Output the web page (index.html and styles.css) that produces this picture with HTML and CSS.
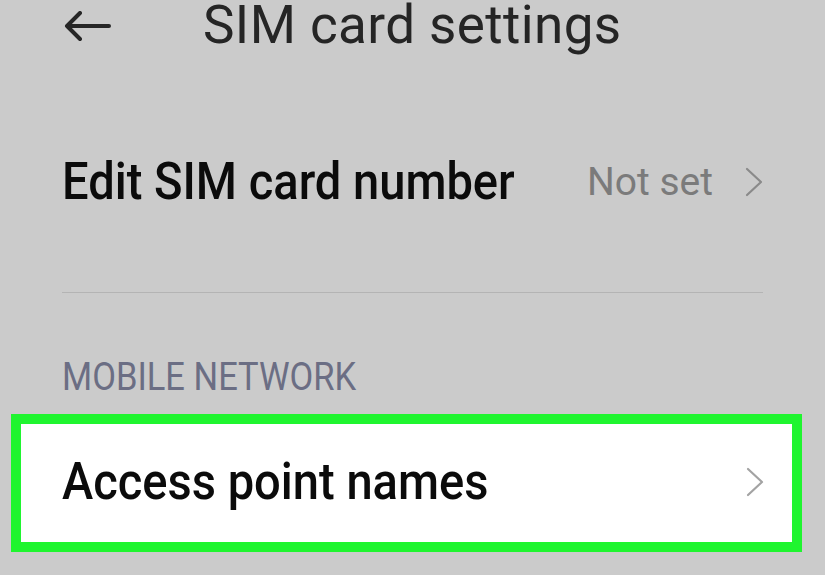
FILE: index.html
```html
<!DOCTYPE html>
<html lang="en">
<head>
<meta charset="utf-8">
<title>SIM card settings</title>
<link rel="stylesheet" href="styles.css">
</head>
<body>
<div class="screen">
  <header class="topbar">
    <svg class="back" width="48" height="32" viewBox="0 0 48 32" aria-hidden="true">
      <path d="M16 2 L3 15 L16 28 M3 15 L45 15" fill="none" stroke="#262626" stroke-width="4" stroke-linecap="round" stroke-linejoin="round"/>
    </svg>
    <h1 class="title">SIM card settings</h1>
  </header>

  <div class="row row-edit">
    <span class="row-label"><span class="condensed">Edit SIM card number</span></span>
    <span class="row-value">Not set</span>
    <svg class="chev" width="18" height="30" viewBox="0 0 18 30" aria-hidden="true">
      <path d="M2 2 L16 15 L2 28" fill="none" stroke="#8a8a8a" stroke-width="2.2" stroke-linecap="round" stroke-linejoin="round"/>
    </svg>
  </div>

  <div class="divider"></div>

  <div class="section-label"><span class="condensed-sm">MOBILE NETWORK</span></div>

  <div class="highlight">
    <div class="row row-apn">
      <span class="row-label"><span class="condensed">Access point names</span></span>
      <svg class="chev" width="18" height="30" viewBox="0 0 18 30" aria-hidden="true">
        <path d="M2 2 L16 15 L2 28" fill="none" stroke="#a3a3a3" stroke-width="2.2" stroke-linecap="round" stroke-linejoin="round"/>
      </svg>
    </div>
  </div>
</div>
</body>
</html>
```

FILE: styles.css
```css
html, body {
  margin: 0;
  padding: 0;
  background: #cbcbcb;
}

.screen {
  width: 825px;
  height: 575px;
  overflow: hidden;
  font-family: Roboto, "Liberation Sans", sans-serif;
}

.topbar {
  display: flex;
  align-items: center;
  height: 62px;
  margin-top: -6px;
}

.back {
  margin-left: 64px;
  margin-top: 4px;
  flex: none;
}

.title {
  margin: 0 0 0 91px;
  font-size: 53px;
  line-height: 62px;
  font-weight: 400;
  color: #252525;
  letter-spacing: 0.4px;
  white-space: nowrap;
}

.condensed,
.condensed-sm {
  display: inline-block;
  transform-origin: left center;
  white-space: nowrap;
}

.condensed {
  transform: scaleX(0.905);
}

.condensed-sm {
  transform: scaleX(0.885);
}

.row {
  display: flex;
  align-items: center;
}

.row-label {
  flex: 1;
  font-size: 52px;
  line-height: 60px;
  font-weight: 500;
  color: #0b0b0b;
}

.row-edit {
  padding: 96px 62px 80px 62px;
}

.row-value {
  font-size: 39px;
  line-height: 60px;
  color: #7b7b7b;
  margin-right: 32px;
}

.chev {
  flex: none;
}

.divider {
  height: 1px;
  margin: 0 62px;
  background: #b4b4b4;
}

.section-label {
  margin: 61px 0 0 62px;
  font-size: 39px;
  line-height: 46px;
  color: #6b6e84;
}

.highlight {
  margin: 14px 0 0 11px;
  width: 771px;
  border: 10px solid #1ff52f;
  background: #ffffff;
}

.row-apn {
  padding: 28px 28px 30px 41px;
}
```
